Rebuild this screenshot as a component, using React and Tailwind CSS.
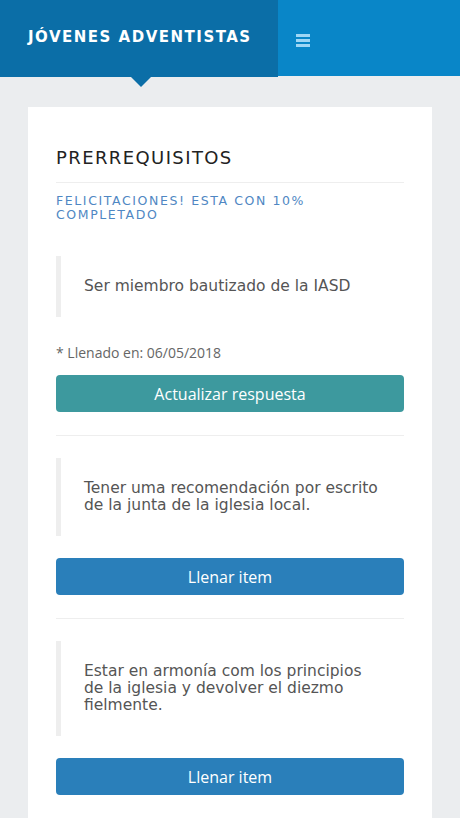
import React from "react";

const mont = { fontFamily: '"DejaVu Sans", "Noto Sans", sans-serif' };

function Quote({ children }) {
  return (
    <div className="border-l-[5px] border-[#eeeeee] pl-[23px] py-[22px] text-[15.5px] leading-[17px] text-[#555]" style={mont}>
      {children}
    </div>
  );
}

function Btn({ children, teal }) {
  return (
    <button className={`w-full h-[37px] rounded-[4px] text-white text-[16px] flex items-center justify-center ${teal ? "bg-[#3d999e]" : "bg-[#2a7fba]"}`} style={{ fontFamily: '"Open Sans", sans-serif' }}>
      {children}
    </button>
  );
}

export default function App() {
  return (
    <div className="min-h-[818px] bg-[#ebedef] overflow-hidden">
      <header className="flex h-[77px]">
        <div className="relative w-[278px] bg-[#0b6ea7] flex items-center pl-[28px] pb-[3px]">
          <span className="text-white font-bold text-[15px] tracking-[1.5px]" style={mont}>JÓVENES ADVENTISTAS</span>
          <div className="absolute left-[131px] top-[77px] w-0 h-0 border-l-[10px] border-r-[10px] border-t-[10px] border-l-transparent border-r-transparent border-t-[#0b6ea7]"></div>
        </div>
        <div className="flex-1 bg-[#0986c8] h-[76px] flex items-center pl-[18px] pt-[5px]">
          <div className="flex flex-col gap-[2.5px] w-[14px]">
            <span className="h-[2.5px] bg-[#9fd6f5]"></span>
            <span className="h-[2.5px] bg-[#9fd6f5]"></span>
            <span className="h-[2.5px] bg-[#9fd6f5]"></span>
          </div>
        </div>
      </header>
      <main className="mx-[28px] mt-[30px] bg-white px-[28px] pt-[39px] pb-[40px]">
        <h1 className="text-[18px] leading-[24px] tracking-[1.4px] text-[#222] pb-[12px] border-b border-[#eeeeee]" style={mont}>PRERREQUISITOS</h1>
        <p className="mt-[11px] text-[12.5px] leading-[14px] tracking-[1.6px] text-[#4f87c3]" style={mont}>FELICITACIONES! ESTA CON 10%<br />COMPLETADO</p>
        <div className="mt-[34px]">
          <Quote>Ser miembro bautizado de la IASD</Quote>
        </div>
        <p className="mt-[25px] text-[14px] text-[#666]" style={{ fontFamily: '"Open Sans", sans-serif' }}>* Llenado en: 06/05/2018</p>
        <div className="mt-[12px]"><Btn teal>Actualizar respuesta</Btn></div>
        <div className="mt-[23px] border-t border-[#eeeeee] pt-[22px]">
          <Quote>Tener uma recomendación por escrito<br />de la junta de la iglesia local.</Quote>
        </div>
        <div className="mt-[22px]"><Btn>Llenar item</Btn></div>
        <div className="mt-[23px] border-t border-[#eeeeee] pt-[22px]">
          <Quote>Estar en armonía com los principios<br />de la iglesia y devolver el diezmo<br />fielmente.</Quote>
        </div>
        <div className="mt-[22px]"><Btn>Llenar item</Btn></div>
      </main>
    </div>
  );
}
